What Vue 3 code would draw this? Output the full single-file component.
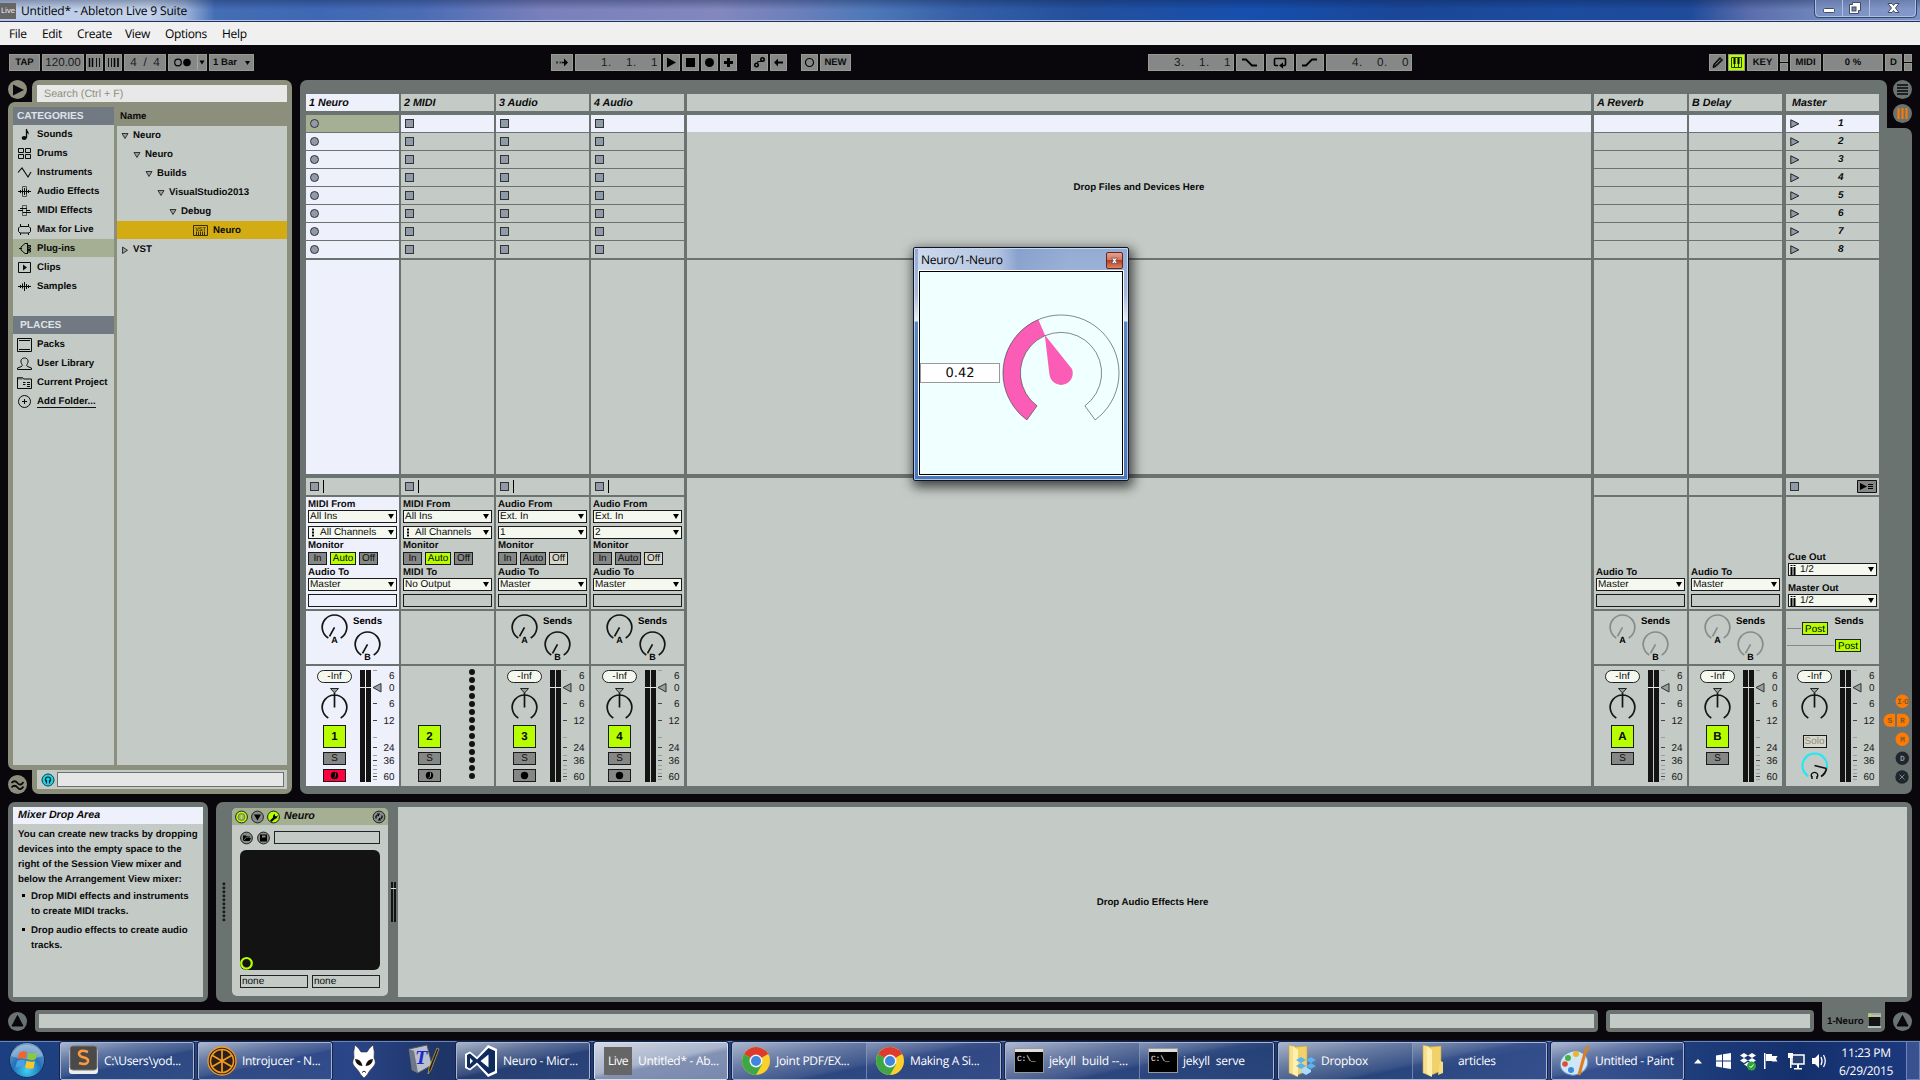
<script setup>
const menus = [
  { t: 'File', w: 33 }, { t: 'Edit', w: 35 }, { t: 'Create', w: 48 }, { t: 'View', w: 40 }, { t: 'Options', w: 57 }, { t: 'Help', w: 40 },
]
const categories = [
  { t: 'Sounds', i: 'sounds' }, { t: 'Drums', i: 'drums' }, { t: 'Instruments', i: 'instr' }, { t: 'Audio Effects', i: 'afx' },
  { t: 'MIDI Effects', i: 'mfx' }, { t: 'Max for Live', i: 'max' }, { t: 'Plug-ins', i: 'plug' }, { t: 'Clips', i: 'clips' }, { t: 'Samples', i: 'samples' },
]
const places = [
  { t: 'Packs', i: 'packs' }, { t: 'User Library', i: 'user' }, { t: 'Current Project', i: 'proj' }, { t: 'Add Folder...', i: 'add' },
]
const icons = {
  sounds: '<path d="M9.500 2v9" stroke-width="1.300"/><ellipse cx="7.200" cy="11" rx="2.500" ry="2" fill="currentColor" stroke="none"/><path d="M9 1.500c.5 2 3.500 2.500 2.500 6.500-.3-1.700-1.500-2.300-2.500-2.500z" fill="currentColor" stroke="none"/>',
  drums: '<path d="M1.500 2.500h5v4h-5zM8.500 2.500h5v4h-5zM1.500 8.500h5v4h-5zM8.500 8.500h5v4h-5z"/>',
  instr: '<path d="M1 7.500L5 3l6 9 3-5" stroke-width="1.100"/>',
  afx: '<path d="M5.500 2.500h4v10h-4z" stroke="#555"/><path d="M1 7.500h13M3.500 6v3M7.500 4v7M11.500 6v3M5.500 5.500v4M9.500 5v5"/>',
  mfx: '<path d="M5.500 2.500h4v10h-4z" stroke="#555"/><path d="M1 7.500h5M3 5.500h7M6 9.500h8M9 7.500h4"/>',
  max: '<path d="M3 4.500h9l1.500 1.500v3.500l-1.500 1.500h-9l-1.500-1.500v-3.500zM3.500 2v3M11.500 2v3M3.500 11v2M11.500 11v2"/>',
  plug: '<path d="M2 7.500h3M10.500 2.500H8L4 6v3l4 3.500h2.500M10.500 2v11M10.500 4.500h3v1.500h-3M10.500 7h3v1.500h-3M10.500 9.500h3v1.500h-3"/>',
  clips: '<path d="M1.500 2.500h12v10h-12z"/><path d="M6 4.500l4 3-4 3z" fill="currentColor" stroke="none"/>',
  samples: '<path d="M1 7.500h13M3.500 6v3M5.500 4.500v5M7.500 3v9M9.500 5v5M11.500 6v3"/>',
  packs: '<path d="M.5 1.500h14v13h-14zM2 3.500h11M2 12.500h11"/>',
  user: '<path d="M.5 13.500h14v-1.500l-4-1.500c-1-.5-1-1.500 0-3 1-1.500 1-5.500-3-5.500s-4 4-3 5.500c1 1.500 1 2.500 0 3l-4 1.500z"/>',
  proj: '<path d="M.5 2.500h5l1 1.500h8v9.500h-14z"/><path d="M1 2.500h4.500v2H1z" fill="#666" stroke="none"/><path d="M6 7.500h2.500M10 7.500h3M6 9.500h2.500M10 9.500h3M10 11.500h3"/>',
  add: '<circle cx="7.500" cy="7.500" r="6"/><path d="M5 7.500h5M7.500 5v5"/>',
}
const tree = [
  { t: 'Neuro', d: 0, o: 1 }, { t: 'Neuro', d: 1, o: 1 }, { t: 'Builds', d: 2, o: 1 }, { t: 'VisualStudio2013', d: 3, o: 1 },
  { t: 'Debug', d: 4, o: 1 }, { t: 'Neuro', sel: 1 }, { t: 'VST', d: 0, o: 0 },
]
const tracks = [
  { name: '1 Neuro', kind: 'track', n: '1', from: 'MIDI From', a: 'All Ins', b: 'All Channels', midi: 1, on: 'Auto', to: 'Audio To', out: 'Master', sends: 1, meter: 1, arm: 'on', active: 1 },
  { name: '2 MIDI', kind: 'track', n: '2', from: 'MIDI From', a: 'All Ins', b: 'All Channels', midi: 1, on: 'Auto', to: 'MIDI To', out: 'No Output', arm: 'midi' },
  { name: '3 Audio', kind: 'track', n: '3', from: 'Audio From', a: 'Ext. In', b: '1', on: 'Off', to: 'Audio To', out: 'Master', sends: 1, meter: 1, arm: 'audio' },
  { name: '4 Audio', kind: 'track', n: '4', from: 'Audio From', a: 'Ext. In', b: '2', on: 'Off', to: 'Audio To', out: 'Master', sends: 1, meter: 1, arm: 'audio' },
  { name: '', kind: 'drop' },
  { name: 'A Reverb', kind: 'return', n: 'A', to: 'Audio To', out: 'Master', sends: 1, dim: 1, meter: 1 },
  { name: 'B Delay', kind: 'return', n: 'B', to: 'Audio To', out: 'Master', sends: 1, dim: 1, meter: 1 },
  { name: 'Master', kind: 'master', meter: 1 },
]
const scale = [['6', 13], ['0', 25], ['6', 41], ['12', 57.500], ['24', 84.500], ['36', 97.500], ['60', 113.500]]
const majors = [37, 54, 81, 94, 110]
const minors = [4, 71, 89, 99, 103, 107, 113]
</script>

<template>
  <div class="screen">
    <header class="title">
      <span class="livebadge">Live</span>
      <span class="ttext">Untitled* - Ableton Live 9 Suite</span>
      <div class="winbtns">
        <svg width="104" height="19" viewBox="0 0 104 19">
          <path d="M.5 0v13q0 4.500 4 4.500h94q4 0 4-4.500V0" fill="#8ea3cf66" stroke="#33456f" />
          <path d="M1.500 0v12.500q0 4 4 4h92q4 0 4-4V0M28.500 0v16M55.500 0v16" fill="none" stroke="#aebfe0" />
          <rect x="9.500" y="8.500" width="11" height="4" rx="1" fill="#fff" stroke="#444c60" />
          <path d="M38.500 2.500h8v8h-2v3h-9v-9h3z" fill="#fff" stroke="#444c60" /><rect x="38" y="7" width="4" height="4" fill="#7288b5" stroke="#444c60" />
          <path d="M74 3.500h4l1.500 2 1.500-2h4l-3.500 4.500 3.500 4.500h-4l-1.500-2-1.500 2h-4l3.500-4.500z" fill="#fff" stroke="#444c60" />
        </svg>
      </div>
    </header>
    <nav class="menu"><span v-for="m in menus" :key="m.t" :style="{ width: m.w + 'px' }">{{ m.t }}</span></nav>

    <div class="toolbar">
      <div class="grp g1">
        <b class="tb" style="width:31px">TAP</b>
        <span class="tb num" style="width:42px">120.00</span>
        <span class="tb" style="width:17px"><svg width="15" height="15"><path d="M2.500 3v9M5.500 3v9" stroke="#000" stroke-width="1.500" /><path d="M9.500 3v9M12.500 3v9" stroke="#111" stroke-width="1" /></svg></span>
        <span class="tb" style="width:17px"><svg width="15" height="15"><path d="M2.500 3v9M5.500 3v9" stroke="#111" /><path d="M8.500 3v9M12 3v9" stroke="#000" stroke-width="1.600" /></svg></span>
        <span class="tb num sig" style="width:42px"><i>4</i><i>/</i><i>4</i></span>
        <span class="tb" style="width:39px"><svg width="37" height="15"><circle cx="9" cy="7.500" r="3.300" fill="none" stroke="#000" stroke-width="1.200" /><circle cx="18" cy="7.500" r="3.800" /><path d="M28.500 0v15" stroke="#a5a99a" /><path d="M30.500 5.500h5l-2.500 4z" /></svg></span>
        <b class="tb bar" style="width:45px">1 Bar<svg width="5" height="5"><path d="M0 0h5l-2.500 4z" /></svg></b>
      </div>
      <div class="grp g2">
        <span class="tb" style="width:22px"><svg width="20" height="15"><path d="M4 6.500h2v2H4zM7.500 6.500h2v2h-2z" fill="#333" /><path d="M10 6.800h2V3.500l4 4-4 4V8.200h-2z" /></svg></span>
        <span class="tb num pos" style="width:86px"><i>1.</i><i>1.</i><i class="l">1</i></span>
        <span class="tb" style="width:17px"><svg width="15" height="15"><path d="M3 2.500l9 5-9 5z" /></svg></span>
        <span class="tb" style="width:17px"><svg width="15" height="15"><path d="M3 3h9v9H3z" /></svg></span>
        <span class="tb" style="width:17px"><svg width="15" height="15"><circle cx="7.500" cy="7.500" r="4.500" /></svg></span>
        <span class="tb" style="width:17px"><svg width="15" height="15"><path d="M6 3h3v3h3v3H9v3H6V9H3V6h3z" /></svg></span>
      </div>
      <div class="grp g3">
        <span class="tb" style="width:17px"><svg width="15" height="15" fill="none" stroke="#000" stroke-width="1.600"><circle cx="4.500" cy="10" r="1.700" /><circle cx="10.500" cy="4.500" r="1.700" /><path d="M5 7.500l1.500-1h2.500l1.500-1" stroke-width="1.200" /></svg></span>
        <span class="tb" style="width:17px"><svg width="15" height="15"><path d="M3 7.500l4-4v3h5v2H7v3z" /></svg></span>
      </div>
      <div class="grp g4">
        <span class="tb" style="width:17px"><svg width="15" height="15"><circle cx="7.500" cy="7.500" r="4" fill="none" stroke="#000" stroke-width="1.200" /></svg></span>
        <b class="tb" style="width:31px">NEW</b>
      </div>
      <div class="grp g5">
        <span class="tb num pos" style="width:86px"><i>3.</i><i>1.</i><i class="l">1</i></span>
        <span class="tb" style="width:28px"><svg width="26" height="15"><path d="M5 4.500h4l6 6h5" fill="none" stroke="#000" stroke-width="1.800" /></svg></span>
        <span class="tb" style="width:28px"><svg width="26" height="15"><path d="M11 10.500H8.500q-1 0-1-1v-5q0-1 1-1h9q1 0 1 1v5q0 1-1 1H15" fill="none" stroke="#000" stroke-width="1.600" /><path d="M16 7.500v6l-4-3z" /></svg></span>
        <span class="tb" style="width:28px"><svg width="26" height="15"><path d="M5 10.500h4l6-6h5" fill="none" stroke="#000" stroke-width="1.800" /></svg></span>
        <span class="tb num pos" style="width:86px"><i>4.</i><i>0.</i><i class="l">0</i></span>
      </div>
      <div class="grp g6">
        <span class="tb" style="width:17px"><svg width="15" height="15"><path d="M3 12.500l1-3.500L10 2.500l2.500 2.500L6 11.500z" fill="#222" stroke="#000" /><path d="M5.500 9.500l5-5" stroke="#868887" stroke-width=".8" /></svg></span>
        <span class="tb hot" style="width:17px"><svg width="15" height="15"><path d="M2.500 2.500h10v10h-10zM5.500 2.500v10M9.500 2.500v10" fill="none" stroke="#2a3a00" /><path d="M4.500 3h2v6h-2zM8.500 3h2v6h-2z" /></svg></span>
        <b class="tb" style="width:31px">KEY</b>
        <span class="halves"><i></i><i></i></span>
        <b class="tb" style="width:31px">MIDI</b>
        <b class="tb cpu" style="width:60px">0 %</b>
        <b class="tb" style="width:17px">D</b>
        <span class="halves"><i></i><i></i></span>
      </div>
    </div>

    <main class="work">
      <section class="browser">
        <div class="btop">
          <svg class="circ" width="20" height="20"><circle cx="9.500" cy="9.500" r="9.500" fill="#8c8f7b" /><path d="M5 4.500l11 5.500-11 5.500z" fill="#09070c" /></svg>
          <div class="stab"><div class="search">Search (Ctrl + F)</div></div>
        </div>
        <div class="bbody">
          <div class="cats">
            <div class="chead">CATEGORIES</div>
            <div v-for="c in categories" :key="c.t" class="crow" :class="{ sel: c.i === 'plug' }">
              <svg width="15" height="15" v-html="icons[c.i]" /><span>{{ c.t }}</span>
            </div>
            <div class="chead places">PLACES</div>
            <div v-for="c in places" :key="c.t" class="crow" :class="{ und: c.i === 'add' }">
              <svg width="15" height="15" v-html="icons[c.i]" /><span>{{ c.t }}</span>
            </div>
          </div>
          <div class="files">
            <div class="fhead">Name</div>
            <div class="flist">
              <div v-for="(r, k) in tree" :key="k" class="frow" :class="{ gold: r.sel }" :style="{ paddingLeft: (r.sel ? 76 : 4 + r.d * 12) + 'px' }">
                <svg v-if="r.sel" width="15" height="11" class="vst"><path d="M.5.5h14v10H.5z" fill="none" stroke="#3a2e00" /><text x="7.500" y="6" text-anchor="middle">VST</text><path d="M3.500 6.500v4M5.500 6.500v4M7.500 6.500v4M9.500 6.500v4M11.500 6.500v4" stroke="#3a2e00" /></svg>
                <svg v-else width="8" height="8"><path :d="r.o ? 'M1 1.500h6l-3 5z' : 'M1.500 1v6.500l5-3.200z'" fill="#9a9ea0" stroke="#333" /></svg>
                <span>{{ r.t }}</span>
              </div>
            </div>
          </div>
        </div>
        <div class="bbot">
          <svg class="circ low" width="20" height="20"><circle cx="9.500" cy="9.500" r="9.500" fill="#8c8f7b" /><path d="M3.500 8q3-3.500 6 0t6-1M3.500 12.500q3-3.500 6 0t6-1" fill="none" stroke="#09070c" stroke-width="1.800" /></svg>
          <div class="ptab"><div class="pbar">
            <svg width="14" height="14"><circle cx="7" cy="7" r="6" fill="#1fd3e6" stroke="#143c42" /><path d="M4.500 8.500V6.500a2.500 2.500 0 0 1 5 0V8.500M5.500 7v3.500M8.500 7v3.500" fill="none" stroke="#06272b" stroke-width="1.200" /></svg>
            <i></i>
          </div></div>
        </div>
      </section>

      <section class="mixer">
        <div class="cols">
          <div v-for="t in tracks" :key="t.name" class="col" :class="[t.kind, { active: t.active }]">
            <div class="head">{{ t.name }}</div>
            <div class="slots">
              <template v-if="t.kind === 'drop'"><div class="s1"></div><div class="rest">Drop Files and Devices Here</div></template>
              <template v-else>
                <div v-for="n in 8" :key="n" class="slot">
                  <i v-if="t.kind === 'track'" class="stop"></i>
                  <template v-if="t.kind === 'master'"><svg width="10" height="10"><path d="M.8.8v8l8-4z" fill="#8f9ba8" stroke="#222" /></svg><b>{{ n }}</b></template>
                </div>
              </template>
            </div>
            <div class="blank"></div>
            <template v-if="t.kind !== 'drop'">
              <div class="stoprow">
                <i v-if="t.kind !== 'return'" class="stop"></i>
                <u v-if="t.kind === 'track'"></u>
                <svg v-if="t.kind === 'master'" class="back" width="20" height="13"><path d="M.5.5h19v12H.5z" fill="#858786" stroke="#111" /><path d="M3 3l7 3.500-7 3.500z" /><path d="M11 4.500h5M11 6.500h5M11 8.500h5" stroke="#000" /></svg>
              </div>
              <div class="io">
                <template v-if="t.kind === 'track'">
                  <b>{{ t.from }}</b>
                  <div class="select">{{ t.a }}</div>
                  <div class="select gap3"><svg v-if="t.midi" width="9" height="9"><path d="M2 .5h2v2H2zM2 3.500h2v2H2zM2 6.500h2v2H2z" /></svg>{{ t.b }}</div>
                  <b>Monitor</b>
                  <div class="mon"><span v-for="m in ['In', 'Auto', 'Off']" :key="m" :class="[m, { on: t.on === m }]">{{ m }}</span></div>
                </template>
                <template v-if="t.kind === 'master'">
                  <b class="push">Cue Out</b>
                  <div class="select"><svg width="9" height="11"><path d="M.5 1h2v1h-2zM.5 3h2v8h-2zM3.500 1h2v1h-2zM3.500 3h2v8h-2z" /></svg>1/2</div>
                  <b class="m5">Master Out</b>
                  <div class="select"><svg width="9" height="11"><path d="M.5 1h2v1h-2zM.5 3h2v8h-2zM3.500 1h2v1h-2zM3.500 3h2v8h-2z" /></svg>1/2</div>
                </template>
                <template v-else>
                  <b :class="{ push2: t.kind === 'return' }">{{ t.to }}</b>
                  <div class="select">{{ t.out }}</div>
                  <div class="empty"></div>
                </template>
              </div>
              <div class="sends">
                <svg v-if="t.sends" width="93" height="53" :class="{ dim: t.dim }">
                  <g v-for="k in [['A', 28.500, 16.300], ['B', 61.500, 33.300]]" :key="k[0]" :transform="`translate(${k[1]} ${k[2]})`">
                    <path class="ring" d="M-6.200 10.600A12.300 12.300 0 1 1 6.200 10.600M0 0L-5 9" />
                    <text class="kl" x="0" y="15.700">{{ k[0] }}</text>
                  </g>
                  <text class="st" x="47" y="13">Sends</text>
                </svg>
                <svg v-if="t.kind === 'master'" width="93" height="53">
                  <path d="M1 17.500h14M1 34.500h47" stroke="#85898a" />
                  <g v-for="p in [[16.500, 11.500], [49.500, 28.500]]" :key="p[0]" :transform="`translate(${p[0]} ${p[1]})`"><rect width="25" height="12" fill="#b7ff00" stroke="#222" /><text class="post" x="12.500" y="9.500">Post</text></g>
                  <text class="st" x="48.500" y="13">Sends</text>
                </svg>
              </div>
              <div class="strip">
                <div class="left">
                  <template v-if="t.meter">
                    <div class="pill">-Inf</div>
                    <svg class="pan" width="35" height="38"><path d="M13.500 2.500h8l-4 4.500z" fill="#9a9e9f" stroke="#222" /><path class="ring" d="M11.300 31.900A12.300 12.300 0 1 1 23.700 31.900M17.500 7v14.500" /></svg>
                  </template>
                  <template v-if="t.kind !== 'master'">
                    <b class="act">{{ t.n }}</b>
                    <span class="btn">S</span>
                    <span v-if="t.arm" class="btn arm" :class="t.arm"><svg width="9" height="9"><circle cx="4.500" cy="4.500" r="3.700" /><path v-if="t.arm !== 'audio'" d="M5.500 1.500v4l-2 1.500" fill="none" :stroke="t.arm === 'on' ? '#ff0040' : '#a0a3a2'" stroke-width=".9" /></svg></span>
                  </template>
                  <template v-else>
                    <span class="solo">Solo</span>
                    <svg class="cue" width="35" height="32"><path d="M11.300 26.200A12.300 12.300 0 1 1 29.600 19" fill="none" stroke="#22e8f5" stroke-width="2" /><path d="M29.500 18.500A12.300 12.300 0 0 1 24 26.500M17.500 15.500l12 3" fill="none" stroke="#111" stroke-width="1.800" /><path d="M15.500 28.500q-2.500-4 0-5.500 2-1.300 4 0 2.500 1.500 0 5.500M15 26v3M20 26v3" fill="none" stroke="#111" stroke-width="1.400" /></svg>
                  </template>
                </div>
                <svg v-if="t.meter" class="meter" width="39" height="120">
                  <path d="M0 4h5v112H0zM6 4h5v112H6z" fill="#131313" />
                  <path d="M0 21.500h11" stroke="#e8e8e8" />
                  <path d="M13 21.500l8-4v8.500z" fill="#9a9e9f" stroke="#333" />
                  <path v-for="y in majors" :key="y" :d="`M13 ${y + .5}h4`" stroke="#444" />
                  <path v-for="y in minors" :key="y" :d="`M13 ${y + .5}h4`" stroke="#9a9e9c" />
                  <text v-for="(s, k) in scale" :key="k" x="34.500" :y="s[1]">{{ s[0] }}</text>
                </svg>
                <svg v-else-if="t.kind === 'track'" class="meter" width="39" height="120"><circle v-for="n in 14" :key="n" cx="17" :cy="n * 8 - 2" r="3" fill="#131313" /></svg>
              </div>
            </template>
            <div v-else class="dropfill"></div>
          </div>
        </div>
        <div class="side">
          <svg class="selectors" width="32" height="48" viewBox="0 0 32 48">
            <circle cx="22.500" cy="9.500" r="9.500" fill="#6b7371" /><path d="M17 5h11M17 8h11M17 11h11M17 14h11" stroke="#09070c" stroke-width="1.300" />
            <circle cx="22.500" cy="33.500" r="9.500" fill="#6b7371" /><path d="M18.500 28v11M22.500 28v11M26.500 28v11" stroke="#ff7b00" stroke-width="2" />
          </svg>
          <svg class="views" width="32" height="76" viewBox="0 0 32 76">
            <g fill="#ff7b00"><circle cx="22.300" cy="10.300" r="6.700" /><path d="M15 22.800v13H10a6.500 6.500 0 0 1 0-13zM17 22.800h5.800a6.500 6.500 0 0 1 0 13H17z" /><circle cx="22.300" cy="48.300" r="6.700" /></g>
            <circle cx="22.300" cy="67.300" r="6.700" fill="#20262d" />
            <g class="vt"><text x="22.300" y="12.700" class="io3">I·O</text><text x="10" y="31.800">S</text><text x="22.500" y="31.800">R</text><text x="22.300" y="50.800">M</text><text x="22.300" y="69.800" class="off">D</text></g>
          </svg>
          <svg class="xv" width="14" height="14"><circle cx="7" cy="7" r="6.700" fill="#20262d" /><path d="M4.500 4.500l5 5M9.500 4.500l-5 5" stroke="#7b8385" /></svg>
        </div>
      </section>
    </main>

    <section class="lower">
      <div class="info">
        <div class="ih">Mixer Drop Area</div>
        <div class="ib">
          <p>You can create new tracks by dropping<br>devices into the empty space to the<br>right of the Session View mixer and<br>below the Arrangement View mixer:</p>
          <p class="li">Drop MIDI effects and instruments<br>to create MIDI tracks.</p>
          <p class="li two">Drop audio effects to create audio<br>tracks.</p>
        </div>
      </div>
      <div class="devview">
        <svg class="dots" width="4" height="40"><rect v-for="n in 10" :key="n" x="0.500" :y="n * 4 - 3.500" width="2.800" height="2.800" rx="1" fill="#1a1c1c" /></svg>
        <div class="device">
          <div class="dh">
            <svg width="46" height="14"><circle cx="6.500" cy="7" r="5.900" fill="#b7ff00" stroke="#222" /><circle cx="6.500" cy="7" r="3.500" fill="#9b9f9a" stroke="#6f8d20" /><path d="M6.500 5v4" stroke="#b7ff00" stroke-width="1.500" /><circle cx="22.500" cy="7" r="5.900" fill="#868a88" stroke="#222" /><path d="M19 4.500h7l-3.500 6z" /><circle cx="38.500" cy="7" r="5.900" fill="#b7ff00" stroke="#222" /><path d="M35 10.500l3-3q-.5-2.500 2-3.500v2l1.500.5 1-1.500q.5 3-2.500 4l-3.500 3z" /></svg>
            <b>Neuro</b>
            <svg class="r" width="14" height="14"><circle cx="7" cy="7" r="5.900" fill="#868a88" stroke="#222" /><path d="M4 8.500V6.500l1.500-1.500M10 5.500v2L8.500 9" fill="none" stroke="#111" stroke-width="1.400" /><path d="M5 3.500h3l-1.500 3zM9 10.500H6l1.500-3z" /></svg>
          </div>
          <div class="dr">
            <svg width="31" height="14"><circle cx="6.500" cy="7" r="5.900" fill="#868a88" stroke="#222" /><path d="M3 10V4.500h3l.8 1H10v1H5.500z" /><path d="M6 7h5l-1.500 3H3.500z" /><circle cx="23.500" cy="7" r="5.900" fill="#868a88" stroke="#222" /><path d="M20 3.500h6.500l.5.500v6.500h-7z" /><path d="M22 4.500h3.500v2H22z" fill="#868a88" /></svg>
            <i></i>
          </div>
          <div class="pad"><svg width="14" height="14"><circle cx="6.500" cy="7.300" r="5.300" fill="none" stroke="#b7ff00" stroke-width="2.200" /></svg></div>
          <div class="nn"><span>none</span><span>none</span></div>
        </div>
        <svg class="dm" width="5" height="40"><path d="M0 0h2v40H0zM3 0h2v40H3z" fill="#131313" /><path d="M0 6.500h5" stroke="#ddd" /></svg>
        <div class="fxdrop">Drop Audio Effects Here</div>
      </div>
    </section>

    <section class="status">
      <svg width="20" height="20"><circle cx="9.500" cy="9.500" r="9.500" fill="#6b7371" /><path d="M9.500 3.500l5.500 10.500H4z" fill="#09070c" stroke="#09070c" stroke-linejoin="round" /></svg>
      <div class="sb s1"></div>
      <div class="sb s2"></div>
      <div class="tab">1-Neuro<svg width="13" height="15"><path d="M0 0h13v15H0z" fill="#b9bfba" /><path d="M.5 4h12v9H.5z" fill="#131313" /><path d="M0 1h13" stroke="#a5af93" stroke-width="2" /><path d="M1 1.500h2M1 3.500h1" stroke="#b7ff00" /></svg></div>
      <svg class="last" width="20" height="20"><circle cx="9.500" cy="9.500" r="9.500" fill="#6b7371" /><path d="M9.500 3.500l5.500 10.500H4z" fill="#09070c" stroke="#09070c" stroke-linejoin="round" /></svg>
    </section>

    <footer class="taskbar">
      <svg class="orb" width="40" height="40" viewBox="0 0 40 40">
        <defs><radialGradient id="orb" cx=".5" cy=".8" r=".8"><stop offset="0" stop-color="#3fd2f5" /><stop offset=".5" stop-color="#2172b8" /><stop offset="1" stop-color="#7fa4cc" /></radialGradient></defs>
        <circle cx="20" cy="20" r="17.500" fill="url(#orb)" stroke="#16305c" /><path d="M4 16a17 17 0 0 1 32 0q-16 6-32 0z" fill="#fff" opacity=".3" />
        <path d="M12 13q4-3 8-1l-1.500 7q-4-1.500-8 .5z" fill="#f0642d" /><path d="M21.500 12.500q4 2 8.500 0l-1.500 7q-4 1.500-8.500-.5z" fill="#8fc73e" /><path d="M10 21q4-2 8-.5l-1.500 7q-4-2-8 .5z" fill="#4aa0e0" /><path d="M19.500 20.700q4 2 8.500.5l-1.500 7q-4 1.500-8.500-.8z" fill="#fbc52d" />
      </svg>
      <div class="task a" style="width:134px">
        <svg width="30" height="40" viewBox="0 0 30 40"><rect x="0" y="7" width="29" height="26" rx="3" fill="#eee" /><rect x="1" y="5" width="27" height="24" rx="3" fill="#4a4a4a" stroke="#777" /><path d="M19 11q-8-3-9 1.500 0 3 5 4 4.500 1 4 4-1 4-9 1.500" fill="none" stroke="#ff9a3c" stroke-width="2.600" /></svg>
        <span>C:\Users\yod...</span>
      </div>
      <div class="task b" style="width:134px">
        <svg width="30" height="40" viewBox="0 0 30 40"><circle cx="15" cy="20" r="14" fill="#2b2118" stroke="#f59a23" stroke-width="1.300" /><circle cx="15" cy="20" r="11.500" fill="none" stroke="#f59a23" stroke-width="1.600" /><g fill="#2b2118" stroke="#f59a23" stroke-width="1.700"><path d="M15 20V8.500M15 20V31.500M15 20L5 14.200M15 20L25 25.800M15 20L25 14.200M15 20L5 25.800" /></g></svg>
        <span>Introjucer - N...</span>
      </div>
      <div class="pin p1"><svg width="26" height="34" viewBox="0 0 26 34"><path d="M4 1q4 3 6 7h6q2-4 6-7 2 7 1 13 3 5-1 9-4 4-6 8l-3 3-3-3q-2-4-6-8-4-4-1-9Q2 8 4 1z" fill="#fff" stroke="#333" stroke-width=".6" /><path d="M4 15q6 0 7.500 7Q5 22 4 15zM22 15q-6 0-7.500 7 6.500 0 7.500-7z" fill="#111" /><path d="M11 28.500l2-1.500 2 1.500" fill="none" stroke="#222" /></svg></div>
      <div class="pin p2"><svg width="32" height="34" viewBox="0 0 32 34"><path d="M1 6l18-4 5 20-14 8-6-3z" fill="#b9c0cc" stroke="#555" /><path d="M1 6l3 21 6 3L6 8z" fill="#6d7788" /><text x="13" y="21" class="tt">T</text><path d="M29 5l-8 20-1 6 3-4 8-21z" fill="#222" stroke="#d8b040" stroke-width=".7" /></svg></div>
      <div class="task c" style="width:134px">
        <svg width="32" height="40" viewBox="0 0 32 40"><path d="M0 13l5-2.500 7 5.500L23 4l9 4v24l-9 4-11-12-7 5.500L0 27z" fill="#fff" /><path d="M2 14l3-1.500 7 6L23.500 7l6.500 3v20l-6.500 3L12 21.500l-7 6L2 26zM5 17v6l3-3zM15.500 20l8 6.500v-13z" fill="#0f2a5c" fill-rule="evenodd" /></svg>
        <span>Neuro - Micr...</span>
      </div>
      <div class="task d act" style="width:134px"><em>Live</em><span>Untitled* - Ab...</span></div>
      <div class="task e dbl" style="width:269px">
        <div v-for="c in ['Joint PDF/EX...', 'Making A Si...']" :key="c">
          <svg width="30" height="40" viewBox="0 0 30 40"><circle cx="15" cy="20" r="14" fill="#fbd02a" /><path d="M15 20L2.900 13A14 14 0 0 1 27.100 13z" fill="#dd3b2e" /><path d="M15 20L2.900 13A14 14 0 0 0 15 34l6-10.500z" fill="#3fa648" /><path d="M15 13h12.200L24 9z" fill="#dd3b2e" /><circle cx="15" cy="20" r="6.500" fill="#f4f4f4" /><circle cx="15" cy="20" r="5" fill="#3f86dd" /></svg>
          <span>{{ c }}</span>
        </div>
      </div>
      <div class="task f dbl" style="width:269px">
        <div v-for="c in ['jekyll  build --...', 'jekyll  serve']" :key="c">
          <svg width="30" height="40" viewBox="0 0 30 40"><rect x=".5" y="7.500" width="29" height="24" fill="#000" stroke="#999" /><rect x="1" y="8" width="28" height="3" fill="#ddd" /><text x="3" y="19.500" class="cm">C:\_</text></svg>
          <span>{{ c }}</span>
        </div>
      </div>
      <div class="task g dbl" style="width:269px">
        <div v-for="(c, k) in ['Dropbox', 'articles']" :key="c">
          <svg width="32" height="40" viewBox="0 0 32 40"><path d="M3 4l8 2v29l-8-3z" fill="#f7e08a" stroke="#c9a23f" stroke-width=".6" /><path d="M9 6l12-1v25L9 35z" fill="#f1d169" stroke="#c9a23f" stroke-width=".6" /><path d="M7 5l5 4v27l-5-3z" fill="#fdf0b0" /><path v-if="k" d="M20 20l3 1v11l-5 2z" fill="#f5dc7e" /><g v-if="!k" fill="#58b4f5"><path d="M15 16l5 3-5 3-5-3zM25 16l5 3-5 3-5-3zM15 22l5 3-5 3-5-3zM25 22l5 3-5 3-5-3z" /><path d="M15 29l5-3 5 3v2l-5 3-5-3z" fill="#a8dcff" /></g></svg>
          <span>{{ c }}</span>
        </div>
      </div>
      <div class="task h" style="width:133px">
        <svg width="34" height="40" viewBox="0 0 34 40"><ellipse cx="15" cy="22" rx="14" ry="12" fill="#cfe6f5" stroke="#5f93b8" transform="rotate(-15 15 22)" /><circle cx="9" cy="17" r="3" fill="#48b04a" /><circle cx="17" cy="13" r="3" fill="#f0b32a" /><circle cx="6" cy="23" r="2.800" fill="#e24a3a" /><circle cx="12" cy="29" r="3" fill="#3c8bd8" /><path d="M27 8l-7 26" stroke="#e07b22" stroke-width="3" /><path d="M25 10q0-5 5-6 2 4-2 7z" fill="#b98a4e" /></svg>
        <span>Untitled - Paint</span>
      </div>
      <svg class="tray" width="138" height="24" viewBox="0 0 138 24" fill="#fff">
        <path d="M4 14.500l4-4.500 4 4.500z" />
        <path d="M26 6.500l6-1v6h-6zM33 5.300l8-1.300v7.500h-8zM26 12.500h6v6l-6-1zM33 12.500h8V20l-8-1.300z" />
        <path d="M54 4l4 2.500-4 2.500-4-2.500zM62 4l4 2.500-4 2.500-4-2.500zM54 9l4 2.500-4 2.500-4-2.500zM62 9l4 2.500-4 2.500-4-2.500zM58 13l4 2.500-4 2.500-4-2.500z" /><circle cx="61.500" cy="17" r="4.500" fill="#2fa43a" /><path d="M59.500 17l1.500 1.500 2.500-3" fill="none" stroke="#fff" />
        <path d="M74 4h1.500v16H74zM76 5h6v7h-6zM82 7h5.500l-1.500 3 1.500 2.500H82z" />
        <path d="M102 6h12v9h-12z" fill="#27406f" stroke="#fff" stroke-width="1.500" /><path d="M104 19h8v1.500h-8zM107 15h2v4h-2zM98 4h5v5h-5zM100 9h1.500v10H100z" />
        <path d="M122 9h3l4-4v14l-4-4h-3z" /><path d="M131 8q2 4 0 8M133.500 6q3.500 6 0 12" fill="none" stroke="#fff" stroke-width="1.300" />
      </svg>
      <div class="clock"><span>11:23 PM</span><span>6/29/2015</span></div>
      <div class="show"></div>
    </footer>

    <div class="plugin">
      <div class="pt"><span>Neuro/1-Neuro</span><svg width="17" height="17"><defs><linearGradient id="cl" x2="0" y2="1"><stop offset="0" stop-color="#eaa28f" /><stop offset=".45" stop-color="#d9755c" /><stop offset=".5" stop-color="#bd3a1f" /><stop offset="1" stop-color="#dd8a62" /></linearGradient></defs><rect x=".5" y=".5" width="16" height="16" rx="1.500" fill="url(#cl)" stroke="#5d2a2a" /><path d="M5.500 6h2.200l.8 1 .8-1h2.200l-1.800 2.700 1.800 2.800H9.300l-.8-1-.8 1H5.500l1.800-2.800z" fill="#fff" stroke="#5a5560" stroke-width=".8" /></svg></div>
      <div class="pc">
        <div class="val">0.42</div>
        <svg width="120" height="120" viewBox="-60 -60 120 120">
          <path d="M-34.100 46.900A58 58 0 0 1 -22.700 -53.400L-15.900 -37.400A40.600 40.600 0 0 0 -23.900 32.800z" fill="#fb5cb5" />
          <path d="M-16.200 -38L11 -4A11.700 11.700 0 1 1 -11.600 1z" fill="#fb5cb5" />
          <path d="M-34.100 46.900A58 58 0 1 1 34.100 46.900L23.900 32.800A40.600 40.600 0 1 0 -23.900 32.800z" fill="none" stroke="#2f3f3f" stroke-opacity=".6" />
        </svg>
      </div>
    </div>
  </div>
</template>

<style>
html, body { margin: 0; background: #09070c; }
</style>

<style scoped>
* { box-sizing: border-box; }
.screen { position: relative; width: 1920px; height: 1080px; overflow: hidden; background: #09070c; font: 9.7px/12px "Liberation Sans", Arial, sans-serif; color: #0b0b0b; display: flex; flex-direction: column; text-rendering: geometricPrecision; }
svg { display: block; flex: none; }
i { font-style: normal; }

.title { height: 22px; flex: none; display: flex; align-items: center; font: 12px/20px "Open Sans", "Noto Sans", sans-serif; color: #000;
  background: linear-gradient(#0a1a4055, #fff0 45%), linear-gradient(90deg, #bccbe6 0, #c3d2ea 150px, #9fb4da 185px, #446db5 215px, #3f68b4 320px, #4a6cb5 420px, #7a80bb 545px, #8387be 720px, #6e80bb 790px, #4e78b8 870px, #3560a8 960px, #24509c 1080px, #164fae 1250px, #1a4797 1400px, #1c4c9f 1560px, #1f4b9a 1690px, #5c6dac 1750px, #6f86bc 1820px, #7d92c4 100%);
  border-bottom: 1px solid #20305c; box-shadow: inset 0 -1px #b4c4e4; position: relative; }
.livebadge { width: 16px; height: 16px; background: #666; color: #fff; font-size: 7.500px; line-height: 16px; text-align: center; }
.ttext { margin-left: 5px; letter-spacing: -.16px; padding-top: 1px; }
.winbtns { margin-left: auto; align-self: flex-start; margin-right: 2px; }
.menu { height: 23px; flex: none; background: #f0f0f0; display: flex; align-items: center; padding: 0 0 1px 9px; font: 12px/21px "Open Sans", "Noto Sans", sans-serif; color: #000; letter-spacing: -.33px; }

.toolbar { height: 35px; flex: none; display: flex; padding-top: 9px; }
.grp { display: flex; gap: 2px; height: 17px; }
.tb { height: 17px; background: #868887; border: 1px solid #979a8e; display: flex; align-items: center; justify-content: center; flex: none; }
b.tb { font-size: 9.500px; padding-top: 1px; }
.num { font-size: 11.700px; color: #1b1b1b; }
.sig i { width: 11.500px; text-align: center; }
.pos { justify-content: flex-end; padding-right: 1px; letter-spacing: .5px; }
.pos i { width: 25px; }
.pos i.l { width: 8px; }
.bar svg { margin-left: 8px; }
.g1 { margin-left: 9px; }
.g2 { margin-left: 297px; gap: 2px; }
.g3 { margin-left: 14px; }
.g4 { margin-left: 14px; }
.g5 { margin-left: 297px; }
.g6 { margin-left: 297px; gap: 2px; }
.hot { background: #b7ff00; }
.halves { width: 8px; display: flex; flex-direction: column; gap: 1px; }
.halves i { height: 8px; background: #868887; border: 1px solid #979a8e; }

.work { height: 714px; flex: none; display: flex; padding-left: 8px; }
.browser { width: 284px; margin-right: 8px; display: flex; flex-direction: column; flex: none; }
.btop { height: 22px; display: flex; }
.circ { margin-right: 4px; }
.stab { flex: 1; background: #8c8f7b; border-radius: 7px 7px 0 0; padding: 5px 5px 0; }
.search { height: 17px; background: #e8e8e8; color: #8c8f7b; font-size: 10.700px; line-height: 18px; padding-left: 7px; }
.bbody { height: 668px; background: #8c8f7b; border-radius: 7px 0 0 7px; display: flex; padding: 5px; gap: 3px; font-weight: bold; font-size: 9.700px; }
.cats { width: 101px; background: #c4cac6; }
.chead { height: 18px; background: #717982; color: #dfe3ea; line-height: 18px; padding: 1px 0 0 4px; font-size: 10.200px; }
.chead.places { margin-top: 21px; padding-left: 7px; }
.crow { height: 18px; margin-bottom: 1px; display: flex; align-items: center; padding-left: 4px; gap: 5px; white-space: nowrap; padding-top: 1px; }
.crow > span { padding-top: 1px; }
.places ~ .crow { position: relative; top: 1px; }
.crow :deep(svg), .crow svg { fill: none; stroke: currentColor; }
.crow.sel { background: #a5af93; }
.und span { border-bottom: 1px solid #111; line-height: 11px; }
.files { flex: 1; display: flex; flex-direction: column; }
.fhead { height: 19px; line-height: 20px; padding-left: 3px; }
.flist { flex: 1; background: #c4cac6; }
.frow { height: 18px; margin-bottom: 1px; display: flex; align-items: center; gap: 4px; padding-top: 1px; }
.gold { background: #d3ab12; gap: 5px; }
.vst text { font: bold 5.500px "Liberation Sans", sans-serif; fill: #3a2e00; }
.bbot { height: 24px; display: flex; }
.low { margin-top: 5px; }
.ptab { flex: 1; background: #8c8f7b; border-radius: 0 0 7px 7px; padding: 0 5px; }
.pbar { height: 19px; background: #c4cac6; display: flex; align-items: center; padding: 0 3px 0 4px; gap: 2px; }
.pbar i { flex: 1; height: 15px; background: #e6e6e6; border: 1px solid #6b7371; }

.mixer { width: 1612px; display: flex; flex: none; }
.cols { width: 1587px; background: #6b7371; border-radius: 7px 7px 0 7px; padding: 14px 0 8px 6px; display: flex; gap: 2px; }
.col { width: 93px; flex: none; display: flex; flex-direction: column; }
.col > div { background: #c4cac6; flex: none; }
.drop { width: 904px; margin: 0 1px; }
.master { margin-left: 2px; }
.head { height: 17px; margin-bottom: 4px; font: italic bold 10.700px/18px "Liberation Sans", sans-serif; padding-left: 3px; }
.master .head { padding-left: 6px; }
.col > .slots { height: 143px; margin-bottom: 2px; background: none; display: flex; flex-direction: column; gap: 1px; }
.slot { height: 17px; background: #c4cac6; padding: 4px; display: flex; }
.slot:first-child { background: #eef0fb; }
.active .slot { background: #eef0fb; }
.active .slot:first-child { background: #a5af93; }
.stop { width: 9px; height: 9px; background: #8f9ba8; border: 1px solid #333; display: block; }
.active .slot .stop { border-radius: 50%; }
.slot b { font: italic bold 10px/9px "Liberation Sans", sans-serif; margin-left: 38px; }
.s1 { height: 17px; background: #eef0fb; margin-bottom: -1px; }
.rest { flex: 1; background: #c4cac6; display: flex; align-items: flex-start; justify-content: center; padding-top: 50px; font-weight: bold; }
.blank { height: 214px; margin-bottom: 4px; }
.dropfill { height: 308px; }
.active > div { background: #eef0fb; }
.stoprow { height: 17px; margin-bottom: 2px; padding: 4px; display: flex; }
.active > .stoprow { background: #c4cac6; }
.stoprow u { width: 1px; height: 13px; background: #000; margin: -2px 0 0 4px; }
.back { margin: -2px -2px 0 auto; }
.io { height: 112px; margin-bottom: 2px; padding: 1px 2px 0; display: flex; flex-direction: column; }
.io b { height: 12px; font-size: 9.700px; line-height: 12px; padding-top: 1px; flex: none; }
.io .select { height: 13px; background: #f4f8ee; border: 1px solid #1a1a1a; font-size: 10px; line-height: 11px; padding-left: 1px; position: relative; display: flex; flex: none; white-space: pre; }
.io .select::after { content: ""; position: absolute; right: 2px; top: 3px; border: 3px solid transparent; border-top: 5px solid #000; border-bottom: 0; }
.io .select svg { margin: 1px 1px 0 0; }
.master .select svg { margin: 0 1px 0 0; }
.gap3 { margin-top: 3px; }
.mon { display: flex; gap: 3px; height: 13px; margin: 1px 0; }
.mon span { height: 13px; border: 1px solid #1a1a1a; background: #858786; font-size: 9.900px; line-height: 11px; text-align: center; width: 19px; }
.mon .Auto { width: 26px; }
.mon .on { background: #d6d6ca; }
.mon .Auto.on { background: #b7ff00; }
.empty { height: 13px; border: 1px solid #1a1a1a; margin-top: 3px; }
.push { margin-top: 53px; }
.push2 { margin-top: 68px; }
.io .m5 { margin-top: 6px; }
.sends { height: 53px; margin-bottom: 2px; }
.ring { fill: none; stroke: #151515; stroke-width: 1.700; }
.dim .ring { stroke: #878c8b; }
.kl { font: bold 9px "Liberation Sans", sans-serif; text-anchor: middle; }
.st { font: bold 9.700px "Liberation Sans", sans-serif; }
.post { font: 9.900px "Liberation Sans", sans-serif; text-anchor: middle; }
.strip { height: 120px; display: flex; padding-left: 11px; }
.left { width: 35px; display: flex; flex-direction: column; align-items: center; margin-right: 8px; padding-top: 4px; }
.pill { width: 35px; height: 13px; border: 1px solid #222; border-radius: 7px; background: #f4f8ee; text-align: center; font-size: 9.900px; line-height: 11px; }
.pan { margin: 3px 0 1px; height: 38px; }
.act { width: 23px; height: 23px; background: #b7ff00; border: 1px solid #1a1a1a; text-align: center; font-size: 11.500px; line-height: 22px; margin-bottom: 4px; flex: none; }
.strip .left > .act:first-child { margin-top: 55px; }
.btn { width: 23px; height: 13px; background: #858786; border: 1px solid #1a1a1a; font-size: 9.900px; line-height: 11px; text-align: center; margin-bottom: 4px; flex: none; display: flex; justify-content: center; align-items: center; }
.arm.on { background: #ff0040; }
.solo { width: 24px; height: 13px; border: 1px solid #1a1a1a; background: #d6d6ca; color: #8c8f7b; font-size: 9.900px; line-height: 11px; text-align: center; margin-top: 10px; }
.cue { margin-top: 2px; }
.meter text { font: 9.900px "Liberation Sans", sans-serif; text-anchor: end; fill: #1a1a1a; }

.side { width: 25px; margin-top: 48px; background: #6b7371; border-radius: 0 7px 7px 0; position: relative; }
.selectors { position: absolute; right: 0; top: -48px; }
.views { position: absolute; top: 563px; left: -7px; }
.xv { position: absolute; left: 8px; top: 642px; }
.vt text { font: bold 8px "Liberation Mono", monospace; text-anchor: middle; fill: #7a5a38; }
.vt .io3 { letter-spacing: -1.200px; }
.vt .off { fill: #8a9294; }

.lower { height: 200px; margin-top: 8px; flex: none; display: flex; padding-left: 8px; gap: 8px; }
.info { width: 200px; background: #6b7371; border-radius: 7px; padding: 5px; }
.ih { height: 17px; background: #eef0fb; font: italic bold 10.700px/17px "Liberation Sans", sans-serif; padding-left: 5px; }
.ib { height: 173px; background: #c4cac6; font-weight: bold; line-height: 15px; padding: 3px 0 0 5px; white-space: nowrap; }
p { margin: 0; }
.li { margin-top: 2px; padding-left: 13px; position: relative; }
.li::before { content: ""; position: absolute; left: 4px; top: 5px; width: 3px; height: 3px; background: #000; }
.two { margin-top: 4px; }
.devview { width: 1696px; background: #6b7371; border-radius: 7px; display: flex; padding: 5px 5px 5px 6px; }
.dots { margin: 75px 6px 0 0; }
.device { width: 156px; height: 188px; margin-top: 1px; background: #c4cac6; border-radius: 5px; overflow: hidden; }
.dh { height: 17px; background: #a5af93; display: flex; align-items: center; padding: 0 3px; font: italic bold 10.700px/17px "Liberation Sans", sans-serif; }
.dh b { margin-left: 3px; }
.dh .r { margin-left: auto; margin-right: -1px; }
.dr { display: flex; padding: 6px 8px 0; gap: 3px; height: 25px; align-items: flex-start; }
.dr i { flex: 1; height: 13px; border: 1px solid #222; }
.pad { height: 120px; margin: 0 8px 5px; background: #131313; border-radius: 6px; display: flex; align-items: flex-end; }
.nn { display: flex; gap: 4px; padding: 0 8px; }
.nn span { flex: 1; height: 13px; border: 1px solid #222; font-size: 10px; line-height: 11px; padding-left: 1px; }
.dm { margin: 75px 2px 0 3px; }
.fxdrop { flex: 1; background: #c4cac6; display: flex; align-items: center; justify-content: center; font-weight: bold; padding-top: 2px; }

.status { height: 38px; flex: none; display: flex; padding-left: 8px; align-items: flex-start; }
.status > svg { margin-top: 10px; }
.sb { height: 22px; margin-top: 8px; background: #c4cac6; border: 4px solid #6b7371; border-radius: 4px; }
.status .s1 { width: 1563px; margin: 8px 8px 0 7px; }
.status .s2 { width: 208px; }
.tab { margin: -2px 0 0 8px; width: 63px; height: 32px; background: #6b7371; border-radius: 0 0 5px 5px; display: flex; font-weight: bold; padding: 13px 0 0 5px; line-height: 17px; gap: 4px; white-space: nowrap; }
.last { margin-left: 8px; }

.taskbar { height: 40px; flex: none; display: flex; font: 12px/40px "Open Sans", "Noto Sans", sans-serif; color: #fff; border-top: 1px solid #0e1830; box-shadow: inset 0 1px #6d86b8; align-items: stretch;
  background: linear-gradient(90deg, #1b3f80, #27447f 200px, #2a4588 350px, #1e3568 440px, #22407c 700px, #2a4280 1000px, #1b3a70 1300px, #2f4a8c 1600px, #1d3c7a 1700px, #14306c 1800px, #1d3a80); }
.orb { margin: -1px 13px 0 7px; }
.task { height: 38px; margin-top: 1px; border: 1px solid #a9b5d0; border-radius: 2px; display: flex; align-items: center; padding-left: 8px; gap: 6px; white-space: pre; letter-spacing: -.3px; flex: none; outline: 1px solid #14244a; outline-offset: 0;
  background: linear-gradient(168deg, #e6eaf2b0 0, #aab4ca80 28%, #8493b540 52%, #6d7fab18 56%, #6d7fab28 100%); }
.a span { margin-left: -1px; }
.b { margin-left: 4px; }
.b span { margin-left: -1px; }
.p1 { margin: 3px 0 0 19px; }
.p2 { margin: 2px 0 0 31px; }
.c { margin-left: 16px; }
.d, .e, .f, .g { margin-left: 4px; }
.h { margin-left: 4px; padding-left: 7px; gap: 2px; }
.task.act { background: linear-gradient(168deg, #f2f4f8d8 0, #c8cfded0 48%, #98a4c0d0 56%, #8f9cbcc8 100%); border-color: #d8deea; font-size: 12px; line-height: 40px; margin-bottom: 0; gap: 6px; }
.task em { width: 28px; height: 28px; background: #666; font: 12px/28px "Open Sans", sans-serif; text-align: center; letter-spacing: -.5px; margin-left: 1px; }
.dbl { padding: 0; gap: 0; }
.dbl > div { flex: 1; height: 100%; display: flex; align-items: center; gap: 5px; padding-left: 8px; }
.f > div { letter-spacing: -.2px; }
.g > div { gap: 3px; padding-left: 7px; }
.g > div + div span { margin-left: 3px; }
.dbl > div + div { border-left: 1px solid #a9b5d088; background: linear-gradient(168deg, #e6eaf240 0, #aab4ca20 30%, #fff0 50%); }
.tt { font: italic bold 20px "Liberation Serif", serif; fill: #1a2ad0; text-anchor: middle; }
.cm { font: 8px "Liberation Mono", monospace; fill: #fff; }
.tray { margin: 8px 0 0 6px; }
.clock { width: 76px; display: flex; flex-direction: column; align-items: center; line-height: 18px; padding-top: 3px; letter-spacing: -.3px; }
.show { margin-left: auto; width: 14px; border: 1px solid #6d86b8; background: #ffffff20; }

.plugin { position: absolute; left: 913px; top: 247px; width: 216px; height: 234px; border: 1px solid #0d1526; border-radius: 2px; box-shadow: 2px 4px 12px 2px #000a, inset 0 0 0 1px #e4ecf8aa; background: linear-gradient(#93abd3 0, #a4b8db 45px, #e8eef8 73px, #5b86c0 74px, #4a78b8 100%); padding: 1px 4px; display: flex; flex-direction: column; }
.pt { height: 21px; display: flex; font: 12px/22px "Open Sans", "Noto Sans", sans-serif; color: #000; padding-left: 3px; letter-spacing: -.3px; background: linear-gradient(90deg, #dbe4f2cc, #c5d2e899 80px, #7492c466 100px, #fff0 150px); margin-bottom: 1px; }
.pt svg { margin: 3px 1px 0 auto; }
.pc { height: 204px; background: #f0ffff; border: 1px solid #000; outline: 1px solid #fff; position: relative; margin: 0 1px; display: flex; align-items: center; }
.val { width: 80px; height: 20px; border: 1px solid #999; background: #fff; font: 13px/19px "DejaVu Sans", sans-serif; text-align: center; margin-left: 0; flex: none; }
.pc svg { margin-left: 1px; }
</style>
